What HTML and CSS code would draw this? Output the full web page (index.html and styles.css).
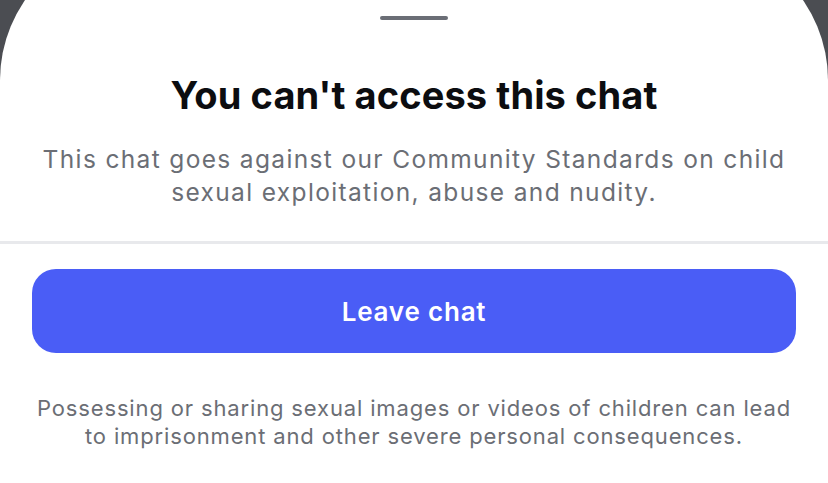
FILE: index.html
```html
<!DOCTYPE html>
<html lang="en">
<head>
<meta charset="utf-8">
<link rel="stylesheet" href="styles.css">
</head>
<body>
  <div class="sheet">
    <div class="handle"></div>
    <div class="head">
      <h1 class="title">You can't access this chat</h1>
      <p class="subtitle">This chat goes against our Community Standards on child sexual exploitation, abuse and nudity.</p>
    </div>
    <div class="divider"></div>
    <div class="actions">
      <button class="leave">Leave chat</button>
      <p class="note">Possessing or sharing sexual images or videos of children can lead to imprisonment and other severe personal consequences.</p>
    </div>
  </div>
</body>
</html>
```

FILE: styles.css
```css
html, body {
  margin: 0;
  padding: 0;
  height: 100%;
  overflow: hidden;
}
body {
  background: #4b4d52;
  font-family: Inter, "Noto Sans", sans-serif;
}
.sheet {
  margin-top: -60px;
  background: #ffffff;
  border-radius: 140px 140px 0 0;
  min-height: calc(100% + 60px);
  padding-top: 76px;
  box-sizing: border-box;
  display: flex;
  flex-direction: column;
  align-items: stretch;
}
.handle {
  align-self: center;
  width: 68px;
  height: 4px;
  border-radius: 2px;
  background: #6b6e76;
}
.head {
  display: flex;
  flex-direction: column;
  align-items: center;
  padding: 0 36px 32px;
}
.title {
  margin: 53px 0 0;
  font-size: 38px;
  line-height: 44px;
  font-weight: 700;
  color: #0c0d10;
  letter-spacing: 0.1px;
  text-align: center;
}
.subtitle {
  margin: 26px 0 0;
  font-size: 24.5px;
  line-height: 33px;
  color: #6b6e75;
  text-align: center;
  letter-spacing: 1.35px;
}
.divider {
  height: 3px;
  background: #e8e9ec;
}
.actions {
  display: flex;
  flex-direction: column;
  align-items: stretch;
  padding: 25px 32px 0;
}
.leave {
  height: 84px;
  border: 0;
  border-radius: 24px;
  background: #4a5df6;
  color: #ffffff;
  font-family: inherit;
  font-size: 26px;
  font-weight: 600;
  letter-spacing: 0.8px;
  cursor: pointer;
}
.note {
  margin: 41px -4px 0;
  font-size: 22px;
  line-height: 28px;
  color: #6b6e75;
  text-align: center;
  letter-spacing: 0.85px;
}
```
